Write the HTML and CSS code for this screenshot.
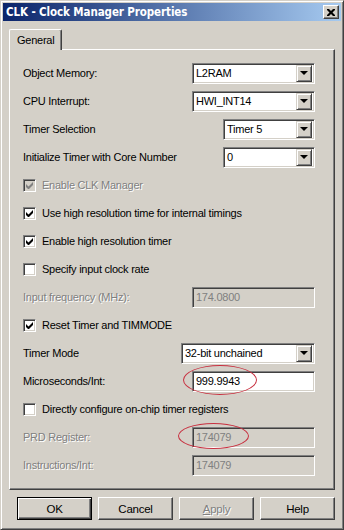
FILE: index.html
```html
<!DOCTYPE html>
<html>
<head>
<meta charset="utf-8">
<link rel="stylesheet" href="styles.css">
</head>
<body>
<div class="window">
  <div class="titlebar">
    <span class="title">CLK - Clock Manager Properties</span>
    <div class="close"><svg width="8" height="7" viewBox="0 0 8 7"><path d="M0 0h2l2 2 2-2h2v1l-2.5 2.5L8 6v1H6L4 5 2 7H0V6l2.5-2.5L0 1z" fill="#000"/></svg></div>
  </div>
  <div class="body">
    <div class="tabs"><div class="tab">General</div></div>
    <div class="panel">
      <div class="row"><span class="label">Object Memory:</span><div class="select w123"><span class="val">L2RAM</span><span class="drop"><i></i></span></div></div>
      <div class="row"><span class="label">CPU Interrupt:</span><div class="select w123"><span class="val">HWI_INT14</span><span class="drop"><i></i></span></div></div>
      <div class="row"><span class="label">Timer Selection</span><div class="select w92"><span class="val">Timer 5</span><span class="drop"><i></i></span></div></div>
      <div class="row"><span class="label">Initialize Timer with Core Number</span><div class="select w92"><span class="val">0</span><span class="drop"><i></i></span></div></div>
      <div class="row"><span class="check disabled"><span class="box"><svg width="7" height="7" viewBox="0 0 7 7"><path d="M0 2v3l2 2h1l4-4V0L2.5 4.5z" fill="#808080"/></svg></span><span class="label dis">Enable CLK Manager</span></span></div>
      <div class="row"><span class="check"><span class="box"><svg width="7" height="7" viewBox="0 0 7 7"><path d="M0 2v3l2 2h1l4-4V0L2.5 4.5z" fill="#000"/></svg></span><span class="label">Use high resolution time for internal timings</span></span></div>
      <div class="row"><span class="check"><span class="box"><svg width="7" height="7" viewBox="0 0 7 7"><path d="M0 2v3l2 2h1l4-4V0L2.5 4.5z" fill="#000"/></svg></span><span class="label">Enable high resolution timer</span></span></div>
      <div class="row"><span class="check"><span class="box"></span><span class="label">Specify input clock rate</span></span></div>
      <div class="row"><span class="label dis">Input frequency (MHz):</span><div class="input w123 disabled">174.0800</div></div>
      <div class="row"><span class="check"><span class="box"><svg width="7" height="7" viewBox="0 0 7 7"><path d="M0 2v3l2 2h1l4-4V0L2.5 4.5z" fill="#000"/></svg></span><span class="label">Reset Timer and TIMMODE</span></span></div>
      <div class="row"><span class="label">Timer Mode</span><div class="select w134"><span class="val">32-bit unchained</span><span class="drop"><i></i></span></div></div>
      <div class="row"><span class="label">Microseconds/Int:</span><div class="input w123">999.9943<span class="ring ring1"></span></div></div>
      <div class="row"><span class="check"><span class="box"></span><span class="label">Directly configure on-chip timer registers</span></span></div>
      <div class="row"><span class="label dis">PRD Register:</span><div class="input w123 disabled">174079<span class="ring ring2"></span></div></div>
      <div class="row"><span class="label dis">Instructions/Int:</span><div class="input w123 disabled">174079</div></div>
    </div>
    <div class="buttons">
      <div class="btn default"><span>OK</span></div>
      <div class="btn"><span>Cancel</span></div>
      <div class="btn disabled"><span><u>A</u>pply</span></div>
      <div class="btn"><span>Help</span></div>
    </div>
  </div>
</div>
</body>
</html>
```
FILE: styles.css
```css
html, body { margin: 0; padding: 0; }
body { width: 344px; height: 530px; overflow: hidden; background: #d4d0c8; font-family: "Liberation Sans", Arial, sans-serif; font-size: 11px; letter-spacing: -0.25px; color: #000; }

.window {
  box-sizing: border-box;
  width: 344px; height: 530px;
  background: #d4d0c8;
  border: 1px solid;
  border-color: #d4d0c8 #404040 #404040 #d4d0c8;
  box-shadow: inset 1px 1px #fff, inset -1px -1px #808080;
  padding: 2px;
  display: flex; flex-direction: column;
}

.titlebar {
  height: 18px;
  background: linear-gradient(to right, #0a246a, #a6caf0);
  display: flex; align-items: center; justify-content: space-between;
  padding: 0 2px 0 3px;
}
.title { color: #fff; font-weight: bold; font-size: 11.5px; font-family: "DejaVu Sans Condensed", "Liberation Sans", sans-serif; letter-spacing: -0.1px; }
.close {
  box-sizing: border-box;
  width: 16px; height: 14px;
  background: #d4d0c8;
  border: 1px solid; border-color: #fff #404040 #404040 #fff;
  box-shadow: inset -1px -1px #808080;
  display: flex; align-items: center; justify-content: center;
  padding-right: 1px;
}

.body { flex: 1; display: flex; flex-direction: column; padding: 8px 6px 0 6px; }

.tabs { display: flex; height: 20px; position: relative; z-index: 2; }
.tab {
  box-sizing: border-box;
  width: 53px; height: 21px;
  background: #d4d0c8;
  border-left: 1px solid #fff; border-top: 1px solid #fff;
  border-right: 1px solid #404040;
  box-shadow: inset -1px 0 #808080;
  border-radius: 2px 2px 0 0;
  padding: 4px 0 0 7px;
}

.panel {
  box-sizing: border-box;
  width: 326px; height: 441px;
  border: 1px solid; border-color: #fff #404040 #404040 #fff;
  box-shadow: inset -1px -1px #808080;
  padding: 9px 19px 0 13px;
  display: flex; flex-direction: column;
}

.row { height: 28px; display: flex; align-items: center; justify-content: space-between; flex: none; }
.label { white-space: nowrap; }
.dis { color: #808080; text-shadow: 1px 1px #fff; }

.check { display: flex; align-items: center; gap: 6px; }
.box {
  box-sizing: border-box; width: 13px; height: 13px;
  background: #fff;
  border: 1px solid; border-color: #808080 #fff #fff #808080;
  box-shadow: inset 1px 1px #404040, inset -1px -1px #d4d0c8;
  display: flex; align-items: center; justify-content: center;
}
.check.disabled .box { background: #d4d0c8; }

.select, .input {
  box-sizing: border-box; height: 21px;
  background: #fff;
  border: 1px solid; border-color: #808080 #fff #fff #808080;
  box-shadow: inset 1px 1px #404040, inset -1px -1px #d4d0c8;
  display: flex; align-items: center;
  padding: 0 2px 0 3px;
  position: relative;
}
.w123 { width: 123px; }
.w92 { width: 92px; }
.w134 { width: 134px; }
.select .val { flex: 1; }
.input.disabled { background: #d4d0c8; color: #808080; }

.drop {
  box-sizing: border-box; width: 16px; height: 17px;
  background: #d4d0c8;
  border: 1px solid; border-color: #d4d0c8 #404040 #404040 #d4d0c8;
  box-shadow: inset 1px 1px #fff, inset -1px -1px #808080;
  display: flex; align-items: center; justify-content: center;
}
.drop i {
  width: 0; height: 0;
  border-left: 4px solid transparent; border-right: 4px solid transparent;
  border-top: 4px solid #000;
  margin-left: -1px;
}

.ring { position: absolute; border: 1px solid #c83040; border-radius: 50%; pointer-events: none; }
.ring1 { left: -10px; top: -7px; width: 72px; height: 28px; }
.ring2 { left: -15px; top: -5px; width: 69px; height: 24px; }

.buttons { display: flex; gap: 6px; padding: 7px 0 0 8px; }
.btn {
  box-sizing: border-box; width: 75px; height: 23px;
  background: #d4d0c8;
  border: 1px solid; border-color: #fff #404040 #404040 #fff;
  box-shadow: inset -1px -1px #808080;
  display: flex; align-items: center; justify-content: center;
  font-size: 11.5px;
}
.btn.default { border: 1px solid #000; box-shadow: inset 1px 1px #fff, inset -1px -1px #404040, inset -2px -2px #808080; }
.btn.disabled { color: #808080; text-shadow: 1px 1px #fff; }
```
